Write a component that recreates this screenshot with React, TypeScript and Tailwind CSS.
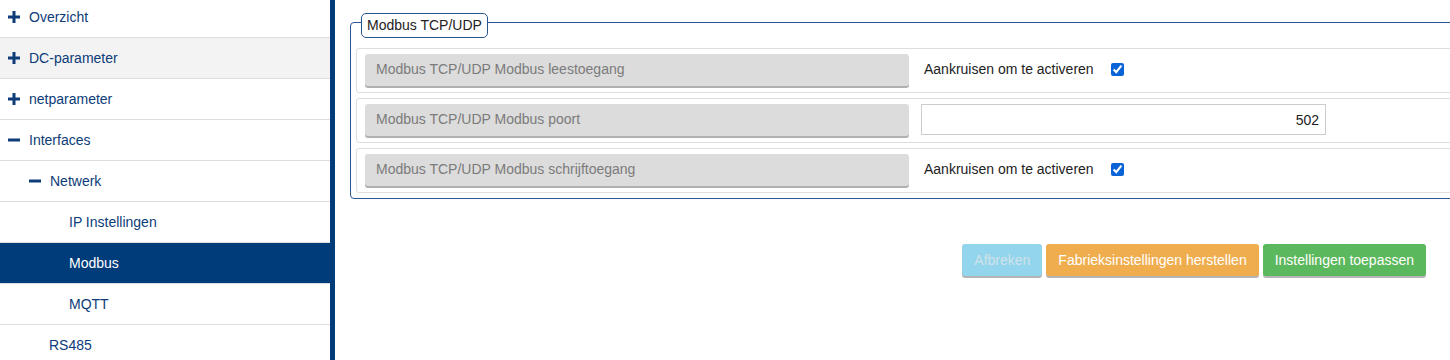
import React from "react";

type NavItem = {
  label: string;
  level: number;
  icon?: "plus" | "minus";
  active?: boolean;
  hover?: boolean;
};

const navItems: NavItem[] = [
  { label: "Overzicht", level: 0, icon: "plus" },
  { label: "DC-parameter", level: 0, icon: "plus", hover: true },
  { label: "netparameter", level: 0, icon: "plus" },
  { label: "Interfaces", level: 0, icon: "minus" },
  { label: "Netwerk", level: 1, icon: "minus" },
  { label: "IP Instellingen", level: 2 },
  { label: "Modbus", level: 2, active: true },
  { label: "MQTT", level: 2 },
  { label: "RS485", level: 1 },
];

const PlusIcon = ({ color }: { color: string }) => (
  <svg width="12" height="12" viewBox="0 0 12 12" className="shrink-0">
    <rect x="0" y="4.5" width="12" height="3" fill={color} />
    <rect x="4.5" y="0" width="3" height="12" fill={color} />
  </svg>
);

const MinusIcon = ({ color }: { color: string }) => (
  <svg width="12" height="12" viewBox="0 0 12 12" className="shrink-0">
    <rect x="0" y="4.5" width="12" height="3" fill={color} />
  </svg>
);

const paddings = ["pl-[8px]", "pl-[29px]", "pl-[69px]"];
const textPaddings = ["pl-[29px]", "pl-[49px]", "pl-[69px]"];

const Sidebar = () => (
  <aside className="w-[335px] shrink-0 border-r-[5px] border-[#003b7a] bg-white overflow-hidden">
    <ul className="-mt-[3px]">
      {navItems.map((item) => (
        <li
          key={item.label}
          className={`h-[41px] border-b border-[#dddddd] flex items-center text-[14px] ${
            item.active ? "bg-[#003b7a] text-white" : item.hover ? "bg-[#f3f3f3] text-[#0d3c78]" : "bg-white text-[#0d3c78]"
          } ${item.icon ? paddings[item.level] : textPaddings[item.level]}`}
        >
          {item.icon === "plus" && <PlusIcon color="#0d3c78" />}
          {item.icon === "minus" && <MinusIcon color="#0d3c78" />}
          <span className={item.icon ? "pl-[9px]" : ""}>{item.label}</span>
        </li>
      ))}
    </ul>
  </aside>
);

const LabelBox = ({ text }: { text: string }) => (
  <div className="w-[544px] h-[32px] shrink-0 bg-[#dcdcdc] rounded-[3px] shadow-[0_2px_0_#b0b0b0] flex items-center pl-[11px] text-[14px] text-[#7b7b7b]">
    {text}
  </div>
);

const CheckField = () => (
  <div className="flex items-center pl-[3px] text-[14px] text-[#222]">
    <span>Aankruisen om te activeren</span>
    <input
      type="checkbox"
      defaultChecked
      className="ml-[17px] w-[13px] h-[13px] accent-[#0b63d8]"
    />
  </div>
);

const SettingRow = ({ label, children }: { label: string; children: React.ReactNode }) => (
  <div className="h-[45px] border border-[#dedede] rounded-[3px] flex items-center pl-[8px] gap-[12px] pb-[2px]">
    <LabelBox text={label} />
    {children}
  </div>
);

export default function App() {
  return (
    <div className="flex h-[360px] w-[1450px] overflow-hidden bg-white font-['Liberation_Sans',Arial,sans-serif]">
      <Sidebar />
      <main className="flex-1 min-w-0 overflow-hidden pt-[22px] pl-[15px]">
        <div className="-mr-[40px] border border-[#2b5591] rounded-[4px] pl-[5px] pr-[5px] pb-[5px]">
          <div className="-mt-[10px] ml-[5px] flex w-fit h-[25px] items-center px-[5px] border border-[#2b5591] rounded-[5px] bg-white text-[14px] text-[#222]">
            Modbus TCP/UDP
          </div>
          <div className="mt-[10px] flex flex-col gap-[5px]">
            <SettingRow label="Modbus TCP/UDP Modbus leestoegang">
              <CheckField />
            </SettingRow>
            <SettingRow label="Modbus TCP/UDP Modbus poort">
              <input
                type="text"
                defaultValue="502"
                className="w-[405px] h-[31px] border border-[#cccccc] text-right pr-[6px] text-[14px] text-[#222] outline-none"
              />
            </SettingRow>
            <SettingRow label="Modbus TCP/UDP Modbus schrijftoegang">
              <CheckField />
            </SettingRow>
          </div>
        </div>
        <div className="mt-[45px] flex justify-end gap-[4px] pr-[24px]">
          <button className="h-[32px] px-[12px] rounded-[3px] bg-[#93d5ec] text-[#cfe2e9] text-[14px] shadow-[0_2px_0_#b5b5b5]">
            Afbreken
          </button>
          <button className="h-[32px] px-[12px] rounded-[3px] bg-[#f0ad4e] text-white text-[14px] shadow-[0_2px_0_#b5b5b5]">
            Fabrieksinstellingen herstellen
          </button>
          <button className="h-[32px] px-[12px] rounded-[3px] bg-[#5cb85c] text-white text-[14px] shadow-[0_2px_0_#b5b5b5]">
            Instellingen toepassen
          </button>
        </div>
      </main>
    </div>
  );
}
